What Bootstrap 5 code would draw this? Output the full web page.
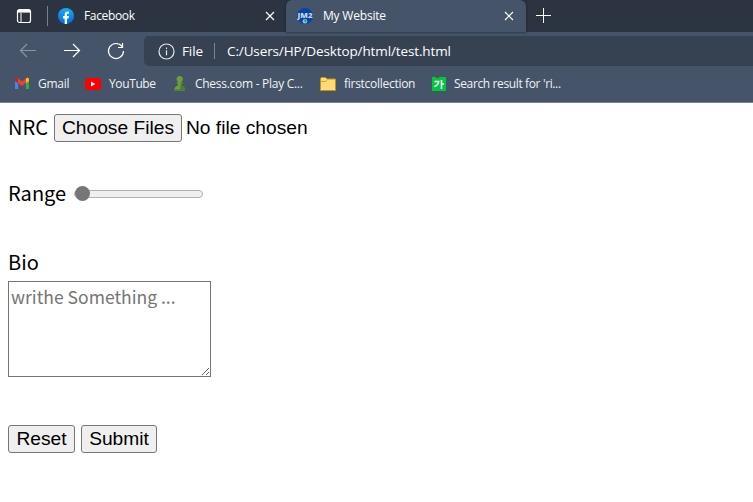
<!DOCTYPE html>
<html lang="en">
<head>
<meta charset="utf-8">
<meta name="viewport" content="width=device-width, initial-scale=1">
<title>My Website</title>
<link href="https://cdn.jsdelivr.net/npm/bootstrap@5.3.0/dist/css/bootstrap.min.css" rel="stylesheet">
<style>
body{font-family:"Noto Sans CJK JP",sans-serif;font-size:20px;line-height:28px;color:#000;background:#fff;overflow:hidden}
.browser{font:12px/16px "Open Sans","Noto Sans",sans-serif;color:#fff;background:#455468;height:103px;border-bottom:1px solid #778496;white-space:nowrap}
.tabs{height:32px;background:#2b3440}
.tool-row{height:38px}
.mark-row{height:32px;color:#f0f2f5;letter-spacing:-.28px}
.side{width:48px;height:32px;padding-left:16px}
.side i{width:1px;height:20px;background:#77808c}
.tab-idle{width:238px;padding-left:10px}
.tab-live{width:240px;height:32px;background:#455468;border-radius:6px 6px 0 0;padding-left:11px;box-shadow:0 0 3px #1b222b}
.caption{margin-left:10px}
.cap-fb{width:181px;letter-spacing:-.35px}
.cap-my{width:181px;letter-spacing:-.2px}
.new-tab{margin-left:8px}
.arrows{width:144px;padding-left:19px}
.address{height:30px;background:#364252;border-radius:5px 0 0 5px;padding-left:14px;font-size:13.5px}
.a-file{width:32px;margin-left:7px;letter-spacing:-.1px}
.a-bar{width:1px;height:16px;background:#7b8592}
.a-path{margin-left:12px;letter-spacing:-.12px}
.mark-row svg{flex:none}
.mark-row span{flex:none;margin-left:8px;line-height:28px}
.m1{width:39px}.m2{width:62px;letter-spacing:-.38px}.m3{width:124px}.m4{width:87px}.m5{width:120px;letter-spacing:-.37px}
.page-form{padding:11px 8px}
.row-a{height:28px}
.box-range{margin-top:38px}
.l-nrc{width:46px;padding-bottom:3px}
.l-range{width:66px;padding-bottom:2px}
.bio-label{margin:40px 0 5px}
.picker{font:19.2px/24px "Liberation Sans",Arial,sans-serif;color:#000;width:320px;height:28px}
.picker::file-selector-button{font:19.2px/24px "Liberation Sans",Arial,sans-serif;width:128px;height:28px;padding:0 5px;margin:0 4px 0 0;border:1px solid #767676;border-radius:3px;background:#efefef;color:#000}
.slider{appearance:none;-webkit-appearance:none;width:129px;height:16px;background:transparent;margin:0}
.slider::-webkit-slider-runnable-track{height:8px;background:#efefef;border:1px solid #b2b2b2;border-radius:4px}
.slider::-webkit-slider-thumb{-webkit-appearance:none;width:15px;height:15px;margin-top:-5px;border-radius:50%;background:#767676}
.bio{width:203px;height:96px;border:1px solid #767676;border-radius:0;padding:1px 2px;font-size:17.55px;line-height:28px;background:#fff}
.bio::placeholder{color:#757575}
.button-row{gap:6px}
.plain{font:19.2px/24px "Liberation Sans",Arial,sans-serif;height:28px;padding:0;border:1px solid #767676;border-radius:3px;background:#efefef;color:#000}
.b-reset{width:67px}.b-submit{width:76px}
</style>
<script src="https://cdn.jsdelivr.net/npm/bootstrap@5.3.0/dist/js/bootstrap.bundle.min.js"></script>
</head>
<body>
<header class="browser">
  <div class="tabs d-flex align-items-center">
    <div class="side d-flex align-items-center justify-content-between">
      <svg width="16" height="16" fill="none" stroke="#fff"><rect x="1.500" y="1.500" width="13" height="13" rx="2" stroke-width="1.200"/><path d="M2 3.300h12" stroke-width="2.600"/><path d="M5 5v9"/></svg>
      <i></i>
    </div>
    <div class="tab-idle d-flex align-items-center">
      <svg width="16" height="16" viewBox="0 0 16 16"><defs><linearGradient id="fb" x2="0" y2="1"><stop stop-color="#18acfe"/><stop offset="1" stop-color="#0166e2"/></linearGradient></defs><circle cx="8" cy="8" r="8" fill="url(#fb)"/><path d="M6.700 16v-5.500H4.900V8h1.800V6.600c0-2 1-3.100 2.900-3.100.6 0 1.100.1 1.500.2v2h-.9c-.9 0-1.200.4-1.200 1.200V8h2l-.4 2.500H9V16z" fill="#fff"/></svg>
      <span class="caption cap-fb">Facebook</span>
      <svg width="10" height="10" stroke="#fff" stroke-width="1.200"><path d="M1 1l8 8M9 1L1 9"/></svg>
    </div>
    <div class="tab-live d-flex align-items-center">
      <svg width="16" height="16" viewBox="0 0 16 16"><circle cx="8" cy="8" r="8" fill="#0645a5"/><text x="0.500" y="10.200" textLength="15" lengthAdjust="spacingAndGlyphs" font-family="Open Sans" font-weight="800" font-size="7.500" fill="#c9d3dc">JM2</text><circle cx="8" cy="13.200" r="2.300" fill="#8ccbdc"/><path d="M7 12l2-.5.500 2-1.500 1z" fill="#498766"/></svg>
      <span class="caption cap-my">My Website</span>
      <svg width="10" height="10" stroke="#fff" stroke-width="1.200"><path d="M1 1l8 8M9 1L1 9"/></svg>
    </div>
    <svg class="new-tab" width="18" height="16" stroke="#fff"><path d="M2 7.500h15M9.500 0v15"/></svg>
  </div>
  <div class="tool-row d-flex align-items-center">
    <div class="arrows d-flex align-items-center">
      <svg width="110" height="18" fill="none" stroke="#fff" stroke-width="1.200"><path d="M17 8.500H1.500M8 2L1.500 8.500 8 15" stroke="#8b95a2"/><path d="M45 8.500h15.500M54 2l6.500 6.500L54 15"/><path d="M103 4.500a7.500 7.500 0 1 0 1.500 4.500M103.500 1v4.500H99"/></svg>
    </div>
    <div class="address d-flex align-items-center flex-grow-1">
      <svg width="17" height="17" fill="none" stroke="#e5e8ec"><circle cx="8.500" cy="8.500" r="7.500" stroke-width="1.200"/><path d="M8.500 7.300v5M8.500 4.500v1.500" stroke-width="1.200"/></svg>
      <span class="a-file">File</span><i class="a-bar"></i><span class="a-path">C:/Users/HP/Desktop/html/test.html</span>
    </div>
  </div>
  <nav class="mark-row d-flex align-items-start">
    <svg width="30" height="28" viewBox="0 0 30 28"><path d="M15 10v9h3.200v-6z" fill="#4285f4"/><path d="M29 10v9h-3.200v-6z" fill="#34a853"/><path d="M15 11V9.500c0-1.600 1.800-2 2.800-1.200L22 11.500l4.200-3.200v4.500L22 16l-4.200-3.200z" fill="#ea4335"/><path d="M26 8.300c1.300-1 3-.4 3 1.200V11l-3 2.300z" fill="#fbbc04"/><path d="M15 9.500c0-1.600 1.800-2 3-1v4.800L15 11z" fill="#c5221f"/></svg>
    <span class="m1">Gmail</span>
    <svg width="24" height="28"><rect x="8" y="8" width="16" height="12" rx="3" fill="#f00"/><path d="M14 11.500v5l4.300-2.500z" fill="#fff"/></svg>
    <span class="m2">YouTube</span>
    <svg width="16" height="28"><path d="M3.500 18.500c.3-2 4-2.500 3.600-5H5l2-1.700a3.200 3.200 0 1 1 3.500 0l2 1.700h-2.200c-.2 2.500 3.300 3 3.700 5v2.300H3.500z" fill="#6f9e3c"/><path d="M10 11.500l2.500 2h-2.200c-.2 2.500 3.300 3 3.700 5v2.300H3.500v-1.600H9z" fill="#4f7d31"/></svg>
    <span class="m3">Chess.com - Play C...</span>
    <svg width="17" height="28"><path d="M1.500 20.500v-12L2.500 7.500h4L8 9h8.500v11.500z" fill="#ffdb78" stroke="#c49313"/><path d="M2 11.500h4.500L8.500 9.500" fill="none" stroke="#d6a523"/></svg>
    <span class="m4">firstcollection</span>
    <svg width="15" height="28"><path d="M1 7h4v1h3V7h7v14H1z" fill="#00c73c"/><path d="M3.500 11.500h4.200c-.2 2.500-1.500 4-4.200 5M10.500 10v9M10.500 14h2.500" stroke="#fff" stroke-width="1.500" fill="none"/></svg>
    <span class="m5">Search result for 'ri...</span>
  </nav>
</header>
<main>
  <form class="page-form">
    <div class="row-a d-flex align-items-center"><label class="l-nrc" for="nrc">NRC</label><input class="picker" id="nrc" type="file" multiple></div>
    <div class="row-a d-flex align-items-center box-range"><label class="l-range" for="range">Range</label><input class="slider" id="range" type="range" value="0"></div>
    <label class="d-block bio-label" for="bio">Bio</label>
    <textarea class="bio d-block" id="bio" placeholder="writhe Something ..."></textarea>
    <div class="d-flex mt-5 button-row"><button class="plain b-reset" type="reset">Reset</button><button class="plain b-submit" type="button">Submit</button></div>
  </form>
</main>
</body>
</html>
